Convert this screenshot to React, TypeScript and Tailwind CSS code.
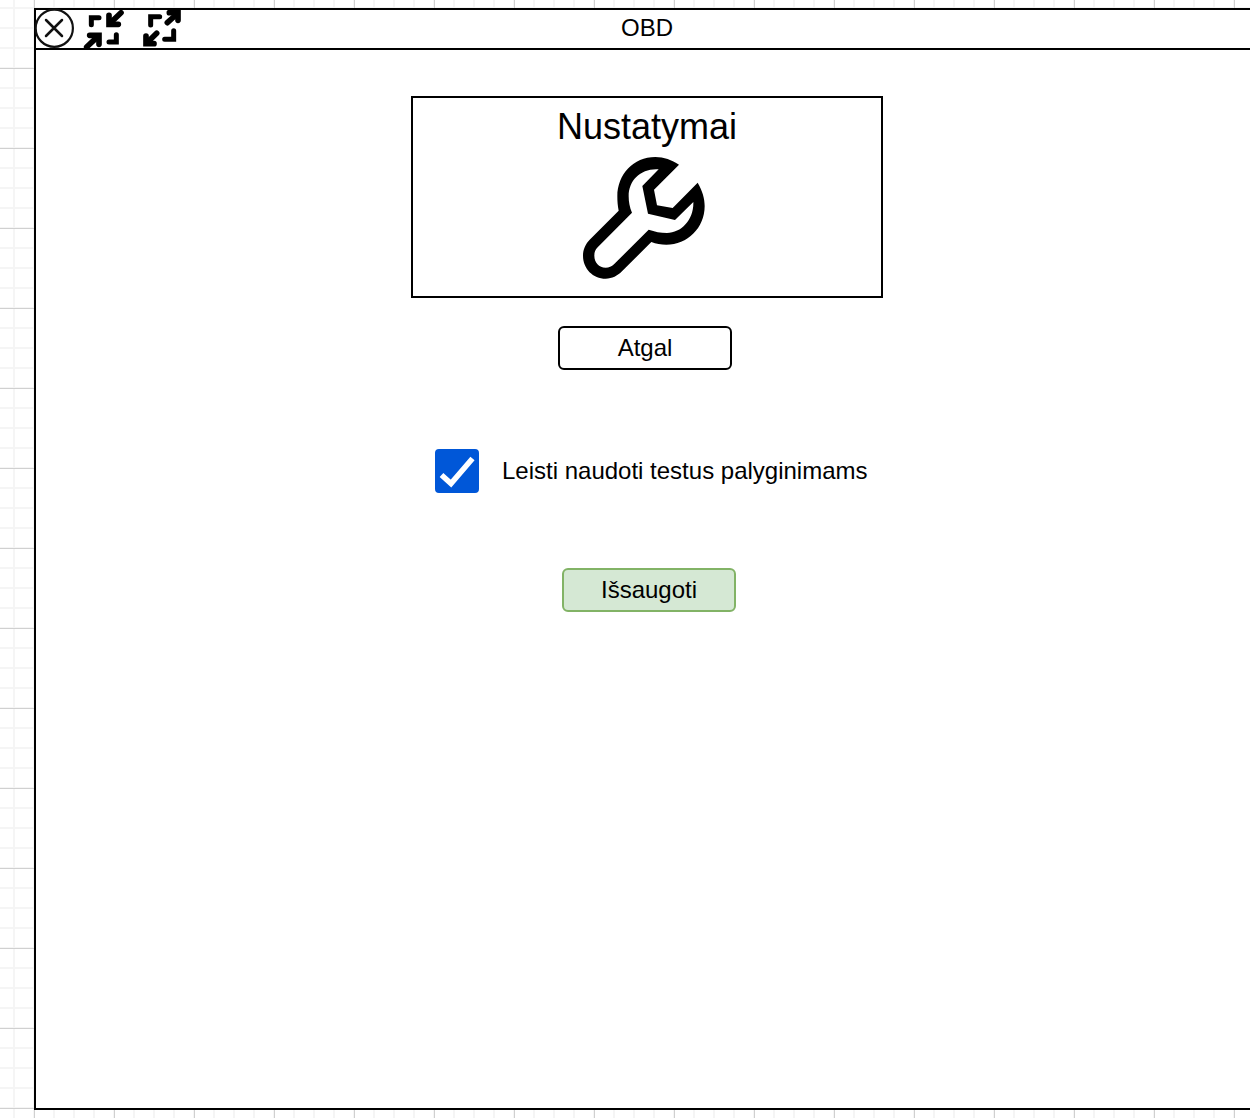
import { useState } from 'react';

function CloseIcon() {
  return (
    <svg viewBox="36 10 38 38" className="h-full w-[38px] overflow-visible" fill="none" stroke="#111" aria-hidden="true">
      <circle cx="54.3" cy="28.2" r="18.6" strokeWidth="2.2" />
      <path d="M46 20L62 36M62 20L46 36" strokeWidth="2.5" strokeLinecap="round" />
    </svg>
  );
}

function ShrinkIcon() {
  return (
    <svg viewBox="252 30 144 114" className="h-full w-12 overflow-visible" fill="none" stroke="#000" strokeLinecap="round" aria-hidden="true">
      <g strokeWidth="15">
        <path d="M274 74V53H297" />
        <path d="M327 126H349V104" />
      </g>
      <g strokeWidth="17">
        <path d="M327 46V73H355" />
        <path d="M363 38L330 70" />
        <path d="M269 106H297V133" />
        <path d="M260 141L294 109" />
      </g>
    </svg>
  );
}

function ExpandIcon() {
  return (
    <svg viewBox="426 30 144 114" className="h-full w-12 overflow-visible" fill="none" stroke="#000" strokeLinecap="round" aria-hidden="true">
      <g strokeWidth="15">
        <path d="M452 75V50H479" />
        <path d="M494 118H521V92" />
      </g>
      <g strokeWidth="17">
        <path d="M508 38H534V61" />
        <path d="M502 68L531 42" />
        <path d="M438 108V131H462" />
        <path d="M470 100L441 128" />
      </g>
    </svg>
  );
}

function WrenchIcon() {
  return (
    <svg viewBox="40 185 384 366" className="mt-2.5 h-[122px] w-32" aria-hidden="true">
      <path
        fillRule="evenodd"
        d="M328 208L253 283L262 330L309 338L384 262C398 287 405 308 405 332C405 398 353 448 290 448C274 448 259 446 245 440L157 528C143 542 128 550 108 550C70 550 40 520 40 481C40 462 47 447 60 433L147 346C144 331 143 318 143 303C143 238 191 185 257 185C283 185 306 194 328 208ZM267 222L218 272L235 355L316 374L371 320C373 372 336 413 292 413C273 413 255 409 237 403L133 507C126 514 118 517 108 517C88 517 74 501 74 481C74 470 77 463 84 456L187 352C180 336 177 320 177 302C177 254 215 218 267 222Z"
      />
    </svg>
  );
}

export default function App() {
  const [allowed, setAllowed] = useState(true);

  return (
    <div className="flex min-h-screen flex-col overflow-hidden bg-white bg-[linear-gradient(to_right,#d0d0d0_1px,transparent_1px),linear-gradient(to_bottom,#d0d0d0_1px,transparent_1px),linear-gradient(to_right,#f5f5f5_2px,transparent_2px),linear-gradient(to_bottom,#f5f5f5_2px,transparent_2px)] bg-[length:80px_80px,80px_80px,20px_20px,20px_20px] bg-[position:34px_0px,0px_68px,13px_0px,0px_7px] py-2 pl-[34px] font-['Liberation_Sans',Arial,sans-serif] text-2xl text-black">
      <div className="-mr-2 flex flex-1 flex-col border-2 border-r-0 border-black bg-white">
        <header className="grid h-10 grid-cols-[1fr_auto_1fr] border-b-2 border-black">
          <div className="flex h-[38px] gap-2.5">
            <button type="button" aria-label="Uždaryti"><CloseIcon /></button>
            <button type="button" aria-label="Sumažinti"><ShrinkIcon /></button>
            <button type="button" aria-label="Išdidinti"><ExpandIcon /></button>
          </div>
          <h1 className="leading-9">OBD</h1>
        </header>

        <main className="flex flex-col items-center pt-[46px]">
          <section className="flex w-full max-w-[472px] flex-col items-center border-2 border-black pt-[9px] pb-[17px]">
            <h2 className="text-4xl">Nustatymai</h2>
            <WrenchIcon />
          </section>

          <nav className="mt-7 pr-1">
            <button type="button" className="h-11 w-[174px] rounded-md border-2 border-black bg-white">
              Atgal
            </button>
          </nav>

          <form
            className="mt-[79px] flex w-full max-w-[472px] flex-col items-center pl-1"
            onSubmit={(event) => event.preventDefault()}
          >
            <label className="flex items-center gap-[23px] self-stretch pl-5">
              <span className="grid shrink-0">
                <input
                  type="checkbox"
                  checked={allowed}
                  onChange={(event) => setAllowed(event.target.checked)}
                  className="peer col-start-1 row-start-1 size-11 appearance-none rounded-sm border-2 border-[#0057d8] checked:bg-[#0057d8]"
                />
                <svg
                  viewBox="0 0 44 44"
                  className="pointer-events-none invisible col-start-1 row-start-1 size-11 peer-checked:visible"
                  fill="none"
                  stroke="#fff"
                  strokeWidth="5.5"
                  aria-hidden="true"
                >
                  <path d="M6.5 26L16 34.5L37.5 9.5" />
                </svg>
              </span>
              Leisti naudoti testus palyginimams
            </label>
            <button type="submit" className="mt-[75px] h-11 w-[174px] rounded-md border-2 border-[#82b366] bg-[#d5e8d4]">
              Išsaugoti
            </button>
          </form>
        </main>
      </div>
    </div>
  );
}
